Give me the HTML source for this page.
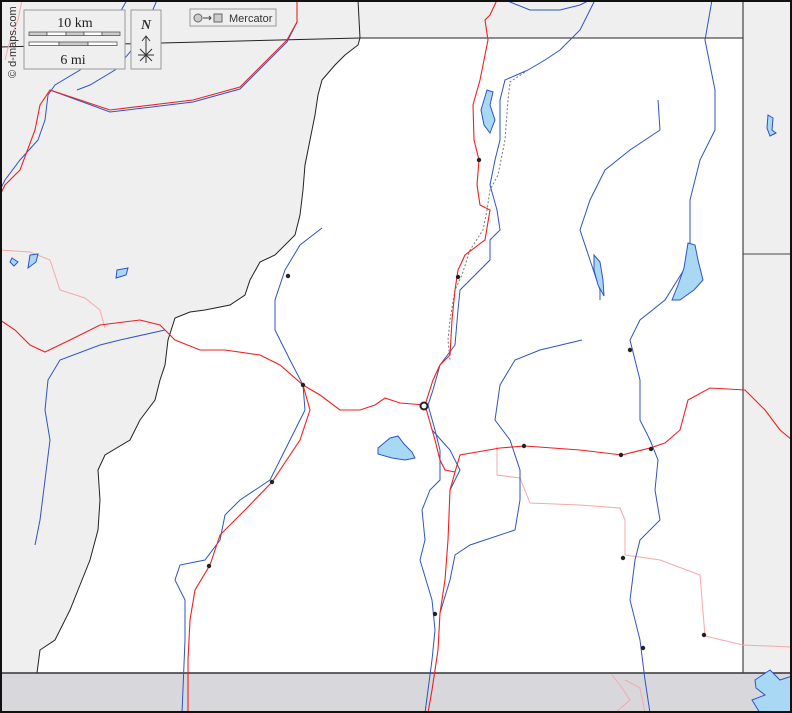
<!DOCTYPE html>
<html><head><style>
html,body{margin:0;padding:0;background:#fff}
svg{display:block}
text{font-family:"Liberation Serif",serif}
</style></head><body>
<svg width="792" height="713" viewBox="0 0 792 713" xmlns="http://www.w3.org/2000/svg">
<rect width="792" height="713" fill="#efefef"/>
<path d="M360,38 L743,38 L743,673 L37,673 L40,650 L55,640 L70,610 L80,585 L90,560 L98,530 L100,500 L98,470 L105,455 L130,440 L140,420 L155,400 L160,380 L165,365 L168,340 L175,318 L190,312 L205,310 L230,305 L245,295 L250,280 L260,262 L275,255 L295,235 L300,215 L303,190 L305,165 L310,140 L315,115 L318,95 L322,80 L335,65 L345,55 L358,45 Z" fill="#fff" stroke="#222" stroke-width="1"/>
<rect x="0" y="673" width="792" height="40" fill="#d8d8dc"/>
<line x1="0" y1="673" x2="792" y2="673" stroke="#333" stroke-width="1.5"/>
<line x1="743" y1="0" x2="743" y2="673" stroke="#444" stroke-width="1.2"/>
<line x1="743" y1="254" x2="792" y2="254" stroke="#444" stroke-width="1"/>
<line x1="0" y1="47" x2="360" y2="38" stroke="#222" stroke-width="1"/>
<line x1="360" y1="38" x2="743" y2="38" stroke="#222" stroke-width="1"/>
<line x1="358" y1="0" x2="360" y2="38" stroke="#222" stroke-width="1"/>
<g fill="none" stroke="#f7a8a8" stroke-width="1">
<path d="M0,250 L30,252 L50,260 L60,290 L85,298 L100,310 L105,328"/>
<path d="M497,446 L497,475 L520,478 L530,503 L580,505 L620,508 L625,520 L625,555 L660,560 L700,575 L705,636 L743,645 L792,647"/>
<path d="M22,0 L18,20 L10,40 L5,60"/>
<path d="M625,680 L640,688 L645,713"/>
<path d="M615,713 L630,700 L620,685 L612,675"/>
</g>
<g fill="none" stroke="#2d54c4" stroke-width="1">
<path d="M127,0 L110,30 L80,70 L55,85 L48,95 L45,120 L38,140 L20,160 L5,180 L0,190"/>
<path d="M157,0 L140,40 L115,70 L90,85 L77,90"/>
<path d="M50,90 L110,112 L193,102 L240,89 L287,42 L297,22"/>
<path d="M505,0 L530,10 L560,10 L580,5 L590,0"/>
<path d="M322,228 L300,245 L285,270 L275,300 L275,330 L290,360 L303,385 L305,410 L290,440 L270,480 L240,500 L225,515 L220,540 L205,560 L180,565 L175,580 L185,600 L185,640 L182,713"/>
<path d="M165,330 L120,340 L100,345 L60,360 L48,380 L45,410 L50,440 L45,480 L40,520 L35,545"/>
<path d="M528,70 L505,80 L500,100 L500,140 L495,160 L490,185 L497,210 L500,230 L490,240 L490,260 L470,280 L460,290 L458,310 L455,345 L440,365 L433,390 L428,405 L435,430 L440,450 L440,480 L430,490 L422,510 L425,540 L420,560 L432,600 L435,630 L432,660 L428,690 L425,713"/>
<path d="M595,0 L580,30 L560,50 L545,60 L528,70"/>
<path d="M658,100 L660,130 L630,150 L605,170 L590,200 L580,230 L590,260 L600,290 L600,300"/>
<path d="M712,0 L705,40 L715,90 L715,130 L700,160 L690,200 L690,240 L690,260 L665,300 L640,320 L630,340 L635,360 L640,380 L640,400 L640,420 L650,440 L658,460 L655,490 L660,520 L640,540 L635,560 L630,600 L640,640 L645,680 L650,713"/>
<path d="M582,340 L540,350 L515,360 L500,385 L495,420 L510,440 L520,470 L520,500 L515,530 L470,545 L455,555 L450,580 L440,613"/>
<path d="M432,430 L450,450 L460,470 L450,490"/>
</g>
<g fill="#a8d8f4" stroke="#2d54c4" stroke-width="1">
<path d="M487,90 L493,92 L490,105 L495,120 L490,133 L484,125 L481,110 Z"/>
<path d="M390,438 L398,436 L404,444 L412,452 L415,458 L405,460 L392,458 L378,454 L378,448 Z"/>
<path d="M688,243 L695,245 L698,260 L703,280 L694,290 L680,300 L672,300 L678,285 L684,268 Z"/>
<path d="M594,255 L600,262 L603,280 L604,296 L598,285 L594,270 Z"/>
<path d="M768,115 L773,118 L772,130 L776,133 L770,136 L767,128 Z"/>
<path d="M117,270 L128,268 L126,275 L116,278 Z"/>
<path d="M30,255 L38,254 L36,262 L28,268 Z"/>
<path d="M12,258 L18,262 L14,266 L10,262 Z"/>
<path d="M755,680 L770,670 L780,680 L792,676 L792,713 L760,713 L752,700 L765,695 L756,688 Z"/>
</g>
<path d="M528,70 L510,82 L508,100 L505,140 L498,175 L490,190 L487,210 L483,230 L470,250 L462,275 L455,290 L450,320 L448,340 L450,360" fill="none" stroke="#777" stroke-width="1" stroke-dasharray="2,2"/>
<g fill="none" stroke="#f02020" stroke-width="1.1">
<path d="M497,0 L490,15 L485,20 L488,40 L480,80 L473,105 L474,140 L479,160 L477,185 L480,205 L490,210 L485,240 L465,255 L458,270 L455,290 L452,320 L450,355 L440,365 L433,380 L425,405"/>
<path d="M425,405 L435,440 L440,460 L445,470 L455,472 L460,455 L500,448 L525,446 L580,450 L622,455 L650,448 L665,443 L680,430 L688,400 L710,388 L745,390 L765,410 L780,430 L792,440"/>
<path d="M425,405 L400,403 L385,398 L375,405 L360,410 L340,410 L320,395 L303,385 L280,365 L260,355 L225,350 L200,350 L175,340 L160,325 L140,320 L100,325 L70,340 L45,352 L30,345 L15,330 L0,320"/>
<path d="M303,385 L310,410 L300,440 L272,482 L245,510 L220,535 L210,565 L195,590 L190,620 L188,660 L188,713"/>
<path d="M455,472 L450,490 L448,540 L445,580 L440,613 L438,650 L432,690 L428,713"/>
<path d="M297,0 L297,22 L287,40 L240,87 L193,100 L110,110 L50,90 L40,105 L35,130 L20,170 L5,185 L0,195"/>
</g>
<g fill="#222">
<circle cx="479" cy="160" r="2.2"/><circle cx="458" cy="277" r="2.2"/><circle cx="288" cy="276" r="2.2"/>
<circle cx="303" cy="385" r="2.2"/><circle cx="630" cy="350" r="2.2"/><circle cx="524" cy="446" r="2.2"/>
<circle cx="621" cy="455" r="2.2"/><circle cx="651" cy="449" r="2.2"/><circle cx="272" cy="482" r="2.2"/>
<circle cx="209" cy="566" r="2.2"/><circle cx="623" cy="558" r="2.2"/><circle cx="704" cy="635" r="2.2"/>
<circle cx="643" cy="648" r="2.2"/><circle cx="435" cy="614" r="2.2"/>
</g>
<circle cx="424" cy="406" r="3.5" fill="#fff" stroke="#222" stroke-width="2"/>
<rect x="24" y="10" width="101" height="59" fill="#efefef" stroke="#999"/>
<text x="75" y="27" font-size="14" text-anchor="middle" fill="#222">10 km</text>
<g stroke="#555" stroke-width="0.8">
<rect x="29" y="32" width="18" height="3.5" fill="#ccc"/><rect x="47" y="32" width="19" height="3.5" fill="#fff"/><rect x="66" y="32" width="18" height="3.5" fill="#ccc"/><rect x="84" y="32" width="18" height="3.5" fill="#fff"/><rect x="102" y="32" width="18" height="3.5" fill="#ccc"/>
<rect x="29" y="42" width="30" height="3.5" fill="#fff"/><rect x="59" y="42" width="29" height="3.5" fill="#ccc"/><rect x="88" y="42" width="29" height="3.5" fill="#fff"/>
</g>
<text x="73" y="64" font-size="14" text-anchor="middle" fill="#222">6 mi</text>
<rect x="131" y="10" width="30" height="59" fill="#efefef" stroke="#999"/>
<text x="146" y="29" font-size="14" font-style="italic" font-weight="bold" text-anchor="middle" fill="#333">N</text>
<g stroke="#333" stroke-width="1" fill="none">
<path d="M146,37 V63 M142,41 L146,36 L150,41 M138,55 H154 M140,49 L152,61 M152,49 L140,61"/>
</g>
<rect x="190" y="9" width="86" height="17" fill="#efefef" stroke="#999"/>
<circle cx="198" cy="18" r="4" fill="#ccc" stroke="#666"/>
<path d="M203,18 H211 M209,16 L211,18 L209,20" stroke="#444" fill="none"/>
<rect x="214" y="14" width="8" height="8" fill="#ccc" stroke="#666"/>
<text x="229" y="22" font-size="11" fill="#333" style="font-family:'Liberation Sans',sans-serif">Mercator</text>
<text transform="translate(16,78) rotate(-90)" font-size="11" fill="#333" style="font-family:'Liberation Sans',sans-serif">© d-maps.com</text>
<rect x="1" y="1" width="790" height="711" fill="none" stroke="#111" stroke-width="2"/>
</svg>
</body></html>
